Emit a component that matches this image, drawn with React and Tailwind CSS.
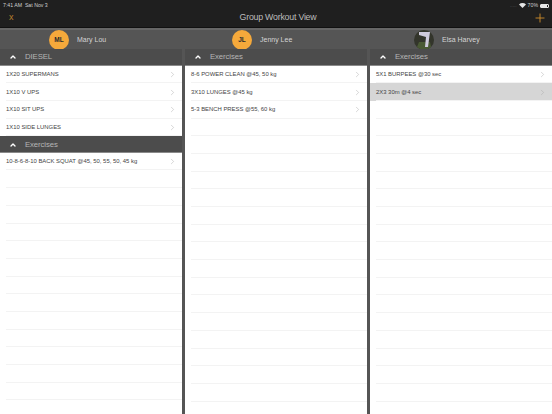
import { ChevronRight, ChevronUp, Plus } from 'lucide-react';

const columns = [
    {
        sections: [
            { title: 'DIESEL', rows: ['1X20 SUPERMANS', '1X10 V UPS', '1X10 SIT UPS', '1X10 SIDE LUNGES'] },
            { title: 'Exercises', rows: ['10-8-6-8-10 BACK SQUAT @45, 50, 55, 50, 45 kg'] },
        ],
        blanks: 14,
    },
    {
        sections: [
            { title: 'Exercises', rows: ['8-6 POWER CLEAN @45, 50 kg', '3X10 LUNGES @45 kg', '5-3 BENCH PRESS @55, 60 kg'] },
        ],
        blanks: 17,
    },
    {
        sections: [
            { title: 'Exercises', rows: ['5X1 BURPEES @30 sec', '2X3 30m @4 sec'], selected: 1 },
        ],
        blanks: 18,
    },
];

function Athlete({ initials, name }) {
    return (
        <div className="flex items-center">
            <div className="flex items-center justify-center w-5 h-5 rounded-full bg-[#f5a93b] text-[6.5px] font-bold text-[#2b2b2b]">
                {initials}
            </div>
            <span className="ml-2 text-[7px] text-[#d4d4d4]">{name}</span>
        </div>
    );
}

function Row({ label, selected }) {
    return (
        <div className={`flex items-center h-[17.7px] px-[6px] pr-[5px] text-[5.9px] font-medium text-[#444] ${selected ? 'bg-[#d6d6d6]' : ''}`}>
            <span className="flex-1">{label}</span>
            <ChevronRight size={9} strokeWidth={1.2} className="text-[#a8a8a8]" />
        </div>
    );
}

function Column({ column }) {
    return (
        <div className="flex-1 bg-white overflow-hidden">
            {column.sections.map((section) => (
                <div key={section.title}>
                    <div className="flex items-center h-[16.5px] pt-px bg-[#4c4c4c] border-b border-[#8a8a8a] text-[7.8px] tracking-[-0.12px] text-[#b5b5b5]">
                        <ChevronUp size={8} strokeWidth={4} className="ml-[9px] text-white" />
                        <span className="ml-[8px]">{section.title}</span>
                    </div>
                    {section.rows.map((row, i) => (
                        <div key={row}>
                            <Row label={row} selected={section.selected === i} />
                            <div className="ml-[6px] h-px -mt-px bg-[#f3f3f3]" />
                        </div>
                    ))}
                </div>
            ))}
            {Array.from({ length: column.blanks }).map((_, i) => (
                <div key={i} className="h-[17.7px] ml-[6px] border-b border-[#f3f3f3]" />
            ))}
        </div>
    );
}

export default function App() {
    return (
        <div className="flex flex-col w-[552px] h-[414px] overflow-hidden bg-[#555] font-['Liberation_Sans',sans-serif]">
            <div className="h-[28px] shrink-0 bg-[#1f1f1f] border-b border-[#111]">
                <div className="flex items-center justify-between h-[8px] pt-[3px] pl-[3px] pr-[3px] text-[5.2px] text-[#cfcfcf]">
                    <span>7:41 AM&nbsp;&nbsp;Sat Nov 3</span>
                    <div className="flex items-center gap-[2px]">
                        <span className="tracking-tight text-[#555]">.....</span>
                        <svg width="7" height="5" viewBox="0 0 14 10" fill="#e5e5e5"><path d="M7 10 0 3a10 10 0 0 1 14 0z" /></svg>
                        <span>70%</span>
                        <div className="w-[9px] h-[4px] rounded-[1px] border-[0.5px] border-[#e5e5e5]">
                            <div className="w-[6px] h-full bg-[#e5e5e5]" />
                        </div>
                    </div>
                </div>
                <div className="grid grid-cols-3 items-center h-[20px] pl-[9px] pr-[5px]">
                    <span className="text-[9px] text-[#b9802c]">x</span>
                    <span className="text-center whitespace-nowrap text-[8.8px] tracking-[-0.22px] text-[#bcbcbc]">Group Workout View</span>
                    <Plus size={14} strokeWidth={1.6} className="justify-self-end text-[#c98a2b]" />
                </div>
            </div>
            <div className="flex items-center h-[21px] shrink-0 pt-[1px] border-t-2 border-[#666]">
                <div className="flex pl-[49px]">
                    <div className="w-[183px]">
                        <Athlete initials="ML" name="Mary Lou" />
                    </div>
                    <div className="w-[182px]">
                        <Athlete initials="JL" name="Jenny Lee" />
                    </div>
                    <div className="flex items-center">
                        <svg width="20" height="20" viewBox="0 0 20 20">
                            <circle cx="10" cy="10" r="10" fill="#33352b" />
                            <path d="M3 17a10 10 0 0 0 14 0l-1-5H5z" fill="#4a5a34" />
                            <path d="M5 2h11l-2 15h-3l1-10-7-2z" fill="#cfcbdc" />
                        </svg>
                        <span className="ml-2 text-[7px] text-[#d4d4d4]">Elsa Harvey</span>
                    </div>
                </div>
            </div>
            <div className="flex flex-1 gap-[3px] min-h-0">
                {columns.map((column, i) => (
                    <Column key={i} column={column} />
                ))}
            </div>
        </div>
    );
}
